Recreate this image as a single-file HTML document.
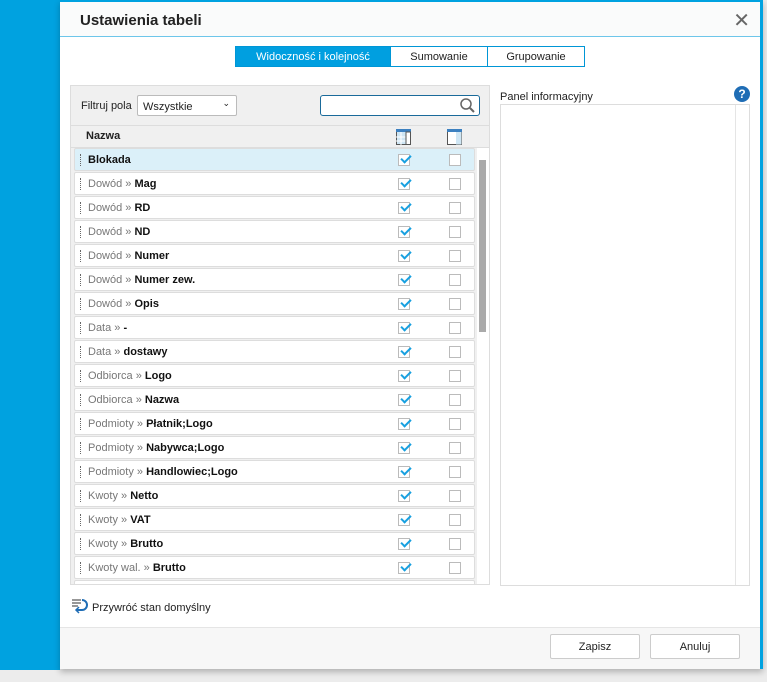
<!DOCTYPE html>
<html><head><meta charset="utf-8"><style>
*{box-sizing:border-box;margin:0;padding:0}
body{width:767px;height:682px;background:#ececec;font-family:"Liberation Sans",sans-serif;font-size:11px;color:#222;position:relative;overflow:hidden}
.strip{position:absolute;left:0;top:0;width:60px;height:670px;background:#00a2e0}
.dlg{position:absolute;left:60px;top:0;width:703px;height:669px;background:#fff;border-top:2px solid #00a2e0;border-right:3px solid #00a2e0;box-shadow:0 3px 6px rgba(0,0,0,.25)}
.hdr{position:absolute;left:0;top:0;width:700px;height:35px;background:#fafbfb;border-bottom:1px solid #6dc6ea}
.hdr .t{position:absolute;left:20px;top:10px;font-size:15px;font-weight:bold;color:#222}
.x{position:absolute;right:10px;top:6px;font-size:20px;color:#666}
.tabs{position:absolute;left:175px;top:44px;height:21px;display:flex;border:1px solid #0096d6}
.tabs div{height:19px;display:flex;align-items:center;justify-content:center;border-left:1px solid #0096d6;font-size:11px}
.lp{position:absolute;left:10px;top:83px;width:420px;height:500px;border:1px solid #ddd;background:#f0f0f0;overflow:hidden}
.rows{position:absolute;left:3px;top:62px;width:401px}
.row{height:23px;margin-bottom:1px;background:#fff;border:1px solid #ddd;border-radius:2px;position:relative;display:flex;align-items:center;padding-left:13px;padding-top:1px;font-size:11px;white-space:pre}
.row .g{color:#777}.row b{color:#111}
.row:before{content:"";position:absolute;left:5px;top:5px;height:12px;border-left:1px dotted #666}
.cb{position:absolute;top:5px;width:12px;height:12px;border:1px solid #bbb;background:#fff}
.cb.c1{left:323px}.cb.c2{left:374px}
.ck:after{content:"";position:absolute;left:2px;top:0px;width:8px;height:4px;border-left:2px solid #18a0e0;border-bottom:2px solid #18a0e0;transform:rotate(-45deg)}
.sb{position:absolute;left:406px;top:62px;width:12px;height:436px;background:#fff}
.btn{position:absolute;top:634px;width:90px;height:25px;border:1px solid #ccc;border-radius:2px;background:#fff;display:flex;align-items:center;justify-content:center;font-size:11px}
</style></head><body>
<div class="strip"></div>
<div class="dlg">
<div class="hdr"><div class="t">Ustawienia tabeli</div><div class="x">✕</div></div>
<div class="tabs"><div style="width:154px;background:#009fe0;color:#fff;border-left:0">Widoczność i kolejność</div><div style="width:97px">Sumowanie</div><div style="width:97px">Grupowanie</div></div>
<div class="lp">
<div style="position:absolute;left:10px;top:14px">Filtruj pola</div>
<div style="position:absolute;left:66px;top:9px;width:100px;height:21px;border:1px solid #bbb;border-radius:2px;background:#fff;padding:5px 5px">Wszystkie<span style="position:absolute;right:6px;top:2px;font-size:9px">⌄</span></div>
<div style="position:absolute;left:249px;top:9px;width:160px;height:21px;border:1px solid #1a6a9a;border-radius:3px;background:#fff"><svg style="position:absolute;right:3px;top:1px" width="17" height="17" viewBox="0 0 17 17"><circle cx="7" cy="7" r="5" fill="none" stroke="#666" stroke-width="1.5"/><path d="M11 11l4 4" stroke="#666" stroke-width="2"/></svg></div>
<div style="position:absolute;left:0;top:39px;width:418px;border-top:1px solid #ddd"></div>
<div style="position:absolute;left:15px;top:44px;font-weight:bold">Nazwa</div>
<svg style="position:absolute;left:325px;top:43px" width="15" height="16"><rect x="0.5" y="0.5" width="14" height="15" fill="#cfe6f4" stroke="#555"/><rect x="0" y="0" width="15" height="3" fill="#3c80c0"/><path d="M5 3v13M10 3v13M0 8h10M0 12h10" stroke="#fff"/><rect x="10" y="3" width="4.5" height="12.5" fill="#fff" stroke="#555"/></svg>
<svg style="position:absolute;left:376px;top:43px" width="15" height="16"><rect x="0.5" y="0.5" width="14" height="15" fill="#fff" stroke="#555"/><rect x="0" y="0" width="15" height="3" fill="#3c80c0"/><rect x="9" y="3" width="5.5" height="12.5" fill="#cfe6f4"/></svg>
<div style="position:absolute;left:0;top:61px;width:418px;border-top:1px solid #ddd"></div>
<div class="rows">
<div class="row" style="background:#dbf0f9"><b>Blokada</b><span class="cb c1 ck"></span><span class="cb c2"></span></div>
<div class="row"><span class="g">Dowód » </span><b>Mag</b><span class="cb c1 ck"></span><span class="cb c2"></span></div>
<div class="row"><span class="g">Dowód » </span><b>RD</b><span class="cb c1 ck"></span><span class="cb c2"></span></div>
<div class="row"><span class="g">Dowód » </span><b>ND</b><span class="cb c1 ck"></span><span class="cb c2"></span></div>
<div class="row"><span class="g">Dowód » </span><b>Numer</b><span class="cb c1 ck"></span><span class="cb c2"></span></div>
<div class="row"><span class="g">Dowód » </span><b>Numer zew.</b><span class="cb c1 ck"></span><span class="cb c2"></span></div>
<div class="row"><span class="g">Dowód » </span><b>Opis</b><span class="cb c1 ck"></span><span class="cb c2"></span></div>
<div class="row"><span class="g">Data » </span><b>-</b><span class="cb c1 ck"></span><span class="cb c2"></span></div>
<div class="row"><span class="g">Data » </span><b>dostawy</b><span class="cb c1 ck"></span><span class="cb c2"></span></div>
<div class="row"><span class="g">Odbiorca » </span><b>Logo</b><span class="cb c1 ck"></span><span class="cb c2"></span></div>
<div class="row"><span class="g">Odbiorca » </span><b>Nazwa</b><span class="cb c1 ck"></span><span class="cb c2"></span></div>
<div class="row"><span class="g">Podmioty » </span><b>Płatnik;Logo</b><span class="cb c1 ck"></span><span class="cb c2"></span></div>
<div class="row"><span class="g">Podmioty » </span><b>Nabywca;Logo</b><span class="cb c1 ck"></span><span class="cb c2"></span></div>
<div class="row"><span class="g">Podmioty » </span><b>Handlowiec;Logo</b><span class="cb c1 ck"></span><span class="cb c2"></span></div>
<div class="row"><span class="g">Kwoty » </span><b>Netto</b><span class="cb c1 ck"></span><span class="cb c2"></span></div>
<div class="row"><span class="g">Kwoty » </span><b>VAT</b><span class="cb c1 ck"></span><span class="cb c2"></span></div>
<div class="row"><span class="g">Kwoty » </span><b>Brutto</b><span class="cb c1 ck"></span><span class="cb c2"></span></div>
<div class="row"><span class="g">Kwoty wal. » </span><b>Brutto</b><span class="cb c1 ck"></span><span class="cb c2"></span></div>
<div class="row"></div>
</div>
<div class="sb"><div style="position:absolute;left:2px;top:12px;width:7px;height:172px;background:#aaa"></div></div>
</div>
<div style="position:absolute;left:440px;top:89px">Panel informacyjny</div>
<div style="position:absolute;left:674px;top:84px;width:16px;height:16px;border-radius:50%;background:#1f6db5;color:#fff;font-weight:bold;font-size:12px;text-align:center;line-height:16px">?</div>
<div style="position:absolute;left:440px;top:102px;width:250px;height:482px;border:1px solid #ddd"><div style="position:absolute;right:0;top:0;width:14px;height:480px;border-left:1px solid #e5e5e5"></div></div>
<svg style="position:absolute;left:12px;top:596px" width="18" height="16"><path d="M0 2h9M0 5h9M0 8h6" stroke="#777" stroke-width="1.5"/><path d="M10 2a5 5 0 0 1 0 10H5" fill="none" stroke="#1f6db5" stroke-width="2"/><path d="M7 9l-3 3 3 3" fill="none" stroke="#1f6db5" stroke-width="1.5"/></svg>
<div style="position:absolute;left:32px;top:600px">Przywróć stan domyślny</div>
<div style="position:absolute;left:0;top:625px;width:700px;height:42px;background:#f7f7f7;border-top:1px solid #e5e5e5"></div>
</div>
<div class="btn" style="left:550px">Zapisz</div>
<div class="btn" style="left:650px">Anuluj</div>
</body></html>
